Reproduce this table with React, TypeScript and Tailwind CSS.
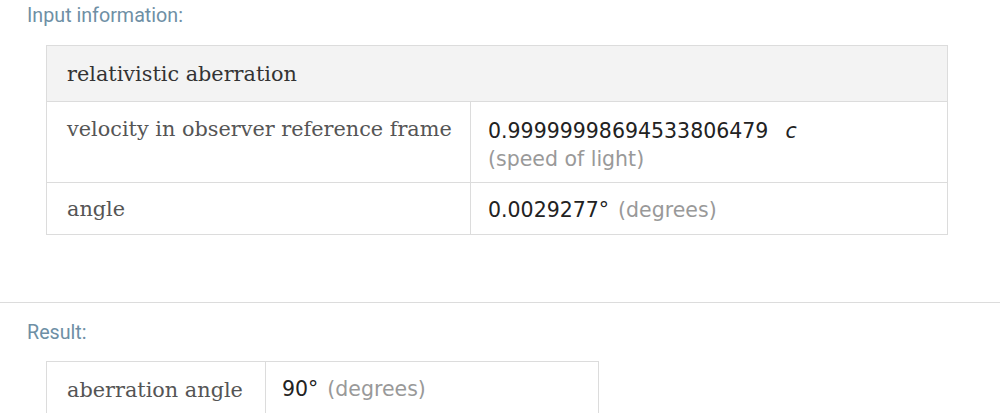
export default function App() {
  const serif = { fontFamily: '"DejaVu Serif", serif' };
  const sans = { fontFamily: '"DejaVu Sans", sans-serif' };
  return (
    <div className="w-[1000px] h-[413px] overflow-hidden bg-white" style={{ fontFamily: 'Roboto, sans-serif' }}>
      <div className="pt-[4px] pl-[27px] text-[19.7px] leading-[24px] text-[#6e8fa5]">Input information:</div>
      <div className="ml-[46px] mt-[17px] w-[902px] border border-[#dcdcdc]">
        <div className="h-[55px] bg-[#f3f3f3] flex items-center pl-[20px] pt-[3px] text-[20.8px] text-[#333]" style={serif}>relativistic aberration</div>
        <div className="flex border-t border-[#dcdcdc] h-[81px]">
          <div className="w-[424px] border-r border-[#dcdcdc] pl-[20px] pt-[12px] text-[20.8px] leading-[30px] text-[#555]" style={serif}>velocity in observer reference frame</div>
          <div className="pl-[17px] pt-[15px] text-[20.5px] leading-[28px]" style={sans}>
            <div className="text-[#222]">0.99999998694533806479<i className="ml-[17px]">c</i></div>
            <div className="text-[#999]">(speed of light)</div>
          </div>
        </div>
        <div className="flex border-t border-[#dcdcdc] h-[52px]">
          <div className="w-[424px] border-r border-[#dcdcdc] pl-[20px] pt-[2px] flex items-center text-[20.8px] text-[#555]" style={serif}>angle</div>
          <div className="pl-[17px] pt-[3px] flex items-center text-[20.5px]" style={sans}>
            <span className="text-[#222]">0.0029277°</span>
            <span className="text-[#999] ml-[9px]">(degrees)</span>
          </div>
        </div>
      </div>
      <div className="mt-[67px] border-t border-[#dcdcdc]"></div>
      <div className="pt-[18px] pl-[27px] text-[19.7px] leading-[24px] text-[#6e8fa5]">Result:</div>
      <div className="ml-[46px] mt-[16px] w-[553px] border border-[#dcdcdc] flex h-[60px]">
        <div className="w-[219px] border-r border-[#dcdcdc] pl-[20px] pt-[13px] text-[20.8px] leading-[30px] text-[#555]" style={serif}>aberration angle</div>
        <div className="pl-[16px] pt-[14px] text-[20.5px] leading-[27px]" style={sans}>
          <span className="text-[#222]">90°</span>
          <span className="text-[#999] ml-[9px]">(degrees)</span>
        </div>
      </div>
    </div>
  );
}
